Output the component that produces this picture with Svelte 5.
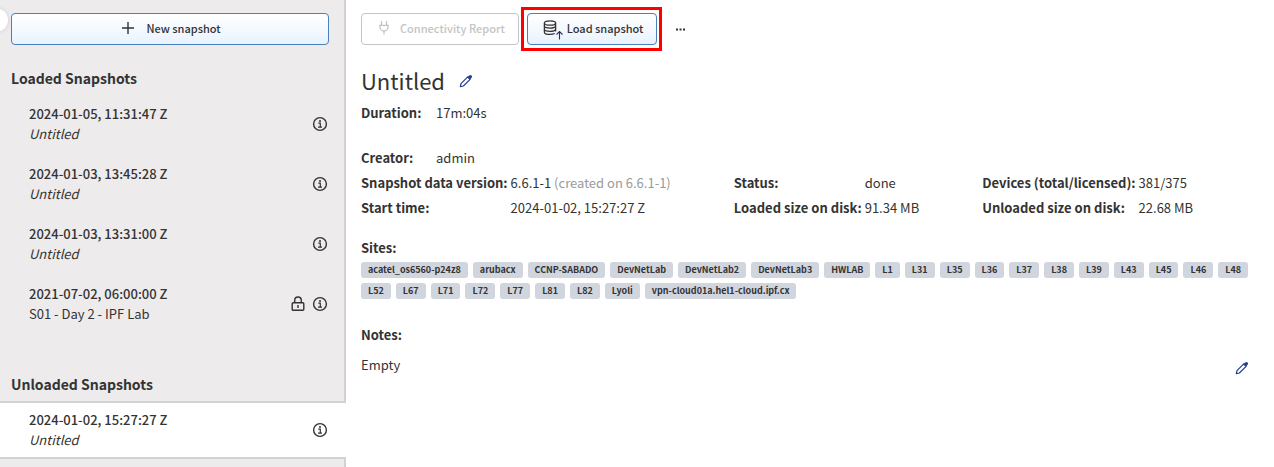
<script>
  const loaded = [
    { time: '2024-01-05, 11:31:47 Z', name: 'Untitled', untitled: true, locked: false },
    { time: '2024-01-03, 13:45:28 Z', name: 'Untitled', untitled: true, locked: false },
    { time: '2024-01-03, 13:31:00 Z', name: 'Untitled', untitled: true, locked: false },
    { time: '2021-07-02, 06:00:00 Z', name: 'S01 - Day 2 - IPF Lab', untitled: false, locked: true }
  ];
  const unloaded = [
    { time: '2024-01-02, 15:27:27 Z', name: 'Untitled', untitled: true, locked: false }
  ];
  const sites = [
    'acatel_os6560-p24z8', 'arubacx', 'CCNP-SABADO', 'DevNetLab', 'DevNetLab2', 'DevNetLab3', 'HWLAB',
    'L1', 'L31', 'L35', 'L36', 'L37', 'L38', 'L39', 'L43', 'L45', 'L46', 'L48', 'L52', 'L67', 'L71',
    'L72', 'L77', 'L81', 'L82', 'Lyoli', 'vpn-cloud01a.hel1-cloud.ipf.cx'
  ];
</script>

{#snippet pencil()}
  <svg class="pencil" width="14" height="14" viewBox="0 0 14 14" aria-hidden="true">
    <path d="M1.3 12.7 L2 9.6 L8.7 2.9 L11.1 5.3 L4.4 12 Z" fill="none" stroke="currentColor" stroke-width="1.2" stroke-linejoin="round" />
    <path d="M8.3 3.3 L10.2 1.4 Q11.4 .4 12.6 1.4 Q13.6 2.6 12.6 3.8 L10.7 5.7 Z" fill="currentColor" />
  </svg>
{/snippet}

{#snippet row(item, selected)}
  <li class="item" class:selected>
    <div class="label">
      <div class="time">{item.time}</div>
      <div class="name" class:untitled={item.untitled}>{item.name}</div>
    </div>
    {#if item.locked}
      <svg class="lock" width="14" height="16" viewBox="0 0 14 16" role="img" aria-label="Locked">
        <g fill="none" stroke="currentColor" stroke-width="1.4">
          <rect x="1.2" y="6.7" width="11.6" height="7.6" rx="1" />
          <path d="M3.7 6.5 V4.3 A3.3 3.3 0 0 1 10.3 4.3 V6.5" />
          <path d="M7 9 V12" />
        </g>
      </svg>
    {/if}
    <button class="icon" aria-label="Snapshot details">
      <svg width="16" height="16" viewBox="0 0 16 16" aria-hidden="true">
        <circle cx="8" cy="8" r="6.4" fill="none" stroke="currentColor" stroke-width="1.4" />
        <path d="M6.3 7.2 H8.3 V11 M6 11.2 H10" fill="none" stroke="currentColor" stroke-width="1.2" />
        <circle cx="8" cy="4.9" r="1" fill="currentColor" />
      </svg>
    </button>
  </li>
{/snippet}

<div class="page">
  <aside>
    <span class="handle"></span>
    <button class="btn wide">
      <svg width="14" height="14" viewBox="0 0 14 14" aria-hidden="true">
        <path d="M7 1 V13 M1 7 H13" stroke="currentColor" stroke-width="1.4" />
      </svg>
      New snapshot
    </button>
    <h2>Loaded Snapshots</h2>
    <ul>
      {#each loaded as item}{@render row(item, false)}{/each}
    </ul>
    <h2 class="second">Unloaded Snapshots</h2>
    <ul>
      {#each unloaded as item}{@render row(item, true)}{/each}
    </ul>
  </aside>

  <main>
    <div class="toolbar">
      <button class="btn" disabled>
        <svg width="14" height="16" viewBox="0 0 14 16" aria-hidden="true">
          <g fill="none" stroke="currentColor" stroke-width="1.3">
            <path d="M4.5 1 V5 M9.5 1 V5 M2 5.3 H12 M7 10.8 V14.5" />
            <path d="M3 5.3 V7 A4 4 0 0 0 11 7 V5.3" />
          </g>
        </svg>
        Connectivity Report
      </button>
      <button class="btn load">
        <svg width="20" height="24" viewBox="0 0 20 24" aria-hidden="true">
          <g fill="none" stroke="currentColor" stroke-width="1.3">
            <ellipse cx="7" cy="7" rx="5.6" ry="2.2" />
            <path d="M1.4 7 V16.2 C1.4 17.5 4 18.4 7 18.4 C8.8 18.4 10.6 18.1 11.7 17.5 M12.6 7 V15.5" />
            <path d="M1.4 10.1 C1.4 12.9 12.6 12.9 12.6 10.1 M1.4 13.3 C1.4 16.1 12.6 16.1 12.6 13.3" />
          </g>
          <path d="M16.5 23.5 V15.5 M13.5 18.5 L16.5 15.5 L19.5 18.5" fill="none" stroke="#2f2f5c" stroke-width="1.1" />
        </svg>
        Load snapshot
      </button>
      <button class="more" aria-label="More actions">
        <svg width="9" height="3" viewBox="0 0 9 3" aria-hidden="true">
          <path d="M0 .5 H2 V2.5 H0 Z M3.5 .5 H5.5 V2.5 H3.5 Z M7 .5 H9 V2.5 H7 Z" fill="currentColor" />
        </svg>
      </button>
    </div>

    <div class="title">
      <h1>Untitled</h1>
      <button class="icon" aria-label="Edit name">{@render pencil()}</button>
    </div>

    <dl class="short">
      <dt>Duration:</dt><dd>17m:04s</dd>
    </dl>
    <dl class="short creator">
      <dt>Creator:</dt><dd>admin</dd>
    </dl>

    <div class="facts">
      <dl>
        <dt>Snapshot data version:</dt><dd>6.6.1-1 <span class="muted">(created on 6.6.1-1)</span></dd>
        <dt>Start time:</dt><dd>2024-01-02, 15:27:27 Z</dd>
      </dl>
      <dl>
        <dt>Status:</dt><dd>done</dd>
        <dt>Loaded size on disk:</dt><dd>91.34 MB</dd>
      </dl>
      <dl>
        <dt>Devices (total/licensed):</dt><dd>381/375</dd>
        <dt>Unloaded size on disk:</dt><dd>22.68 MB</dd>
      </dl>
    </div>

    <h3>Sites:</h3>
    <ul class="sites">
      {#each sites as site}<li>{site}</li>{/each}
    </ul>

    <h3 class="notes-title">Notes:</h3>
    <div class="notes">
      <span>Empty</span>
      <button class="icon" aria-label="Edit notes">{@render pencil()}</button>
    </div>
  </main>
</div>

<style>
  :global(body) {
    background: #fff;
    overflow: hidden;
  }
  .page {
    display: grid;
    grid-template-columns: 346px 1fr;
    min-height: 100vh;
    color: #333;
    font: 13px/20px "Source Sans Pro", "Noto Sans CJK SC", sans-serif;
  }
  button {
    font: inherit;
    color: inherit;
    cursor: pointer;
  }
  h1, h2, h3, ul, dl, dd {
    margin: 0;
    padding: 0;
  }
  ul {
    list-style: none;
  }
  aside {
    position: relative;
    box-sizing: border-box;
    padding-top: 13px;
    border-right: 2px solid #d3d1d1;
    background: #edebeb;
  }
  .handle {
    position: absolute;
    top: 8px;
    left: -16px;
    width: 24px;
    height: 24px;
    border-radius: 50%;
    background: #fff;
    box-shadow: 0 0 4px #0002;
  }
  .btn {
    position: relative;
    display: flex;
    align-items: center;
    justify-content: center;
    gap: 9px;
    box-sizing: border-box;
    height: 32px;
    padding: 0 13px 2px 15px;
    border: 1px solid #4a80bb;
    border-radius: 4px;
    background: linear-gradient(#fff, #e8f3fe);
    font-size: 11px;
    font-weight: 500;
    white-space: nowrap;
  }
  .btn:disabled {
    border-color: #c4c4c4;
    background: #fff;
    color: #c4c4c4;
  }
  .wide {
    gap: 11px;
    width: calc(100% - 26px);
    margin-left: 11px;
  }
  h2 {
    margin: 21px 11px 4px;
    font-size: 14px;
    line-height: 24px;
    font-weight: 700;
  }
  .second {
    margin-top: 38px;
    margin-bottom: 5px;
  }
  .item {
    display: flex;
    align-items: center;
    gap: 7px;
    padding: 10px 16px 10px 29px;
  }
  .selected {
    margin-right: -2px;
    padding: 7px 18px 7px 29px;
    border: solid #d3d1d1;
    border-width: 2px 0;
    background: #fff;
  }
  .label {
    flex: 1;
  }
  .time {
    font-weight: 500;
  }
  .untitled {
    font-style: italic;
  }
  .icon {
    display: flex;
    padding: 0;
    border: 0;
    background: none;
  }
  .pencil {
    color: #263f8f;
  }
  main {
    padding: 13px 25px 20px 15px;
  }
  .toolbar {
    display: flex;
    gap: 8px;
  }
  .load {
    gap: 4px;
  }
  .load::after {
    content: "";
    position: absolute;
    inset: -7px -6px -7px -7px;
    border: 3px solid #f00;
    pointer-events: none;
  }
  .more {
    display: flex;
    align-items: center;
    margin-left: 5px;
    border: 0;
    background: none;
  }
  .title {
    display: flex;
    align-items: center;
    gap: 14px;
    margin-top: 21px;
  }
  h1 {
    font-size: 22px;
    line-height: 28px;
    font-weight: 400;
  }
  .title .icon {
    padding-top: 2px;
  }
  dl {
    display: grid;
    grid-template-columns: max-content auto;
    column-gap: 3px;
    justify-content: start;
    line-height: 25px;
  }
  dt, h3 {
    font-weight: 700;
  }
  .short {
    grid-template-columns: 72px auto;
    margin-top: 6px;
  }
  .creator {
    margin-top: 20px;
  }
  .facts {
    display: flex;
    gap: 63px;
  }
  .muted {
    color: #999;
  }
  h3 {
    margin-top: 18px;
    font-size: 13px;
    line-height: 20px;
  }
  .sites {
    display: flex;
    flex-wrap: wrap;
    gap: 5px;
    margin-top: 4px;
  }
  .sites li {
    padding: 0 7px;
    border-radius: 3px;
    background: #d1d5de;
    font: 700 9px/16px "Noto Sans CJK SC", sans-serif;
  }
  .notes-title {
    margin-top: 26px;
  }
  .notes {
    display: flex;
    justify-content: space-between;
    align-items: end;
    margin-top: 10px;
  }
</style>
